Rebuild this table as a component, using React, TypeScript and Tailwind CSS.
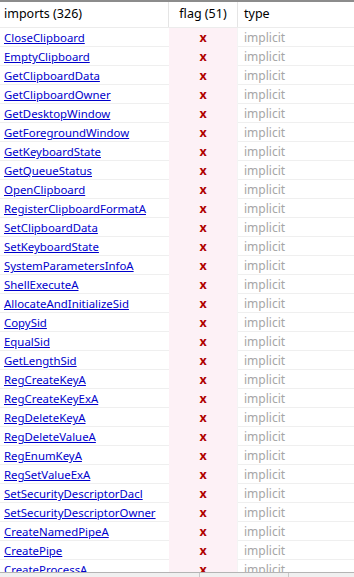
import React from 'react';

// imports list as shown in the table
const imports = [
  'CloseClipboard',
  'EmptyClipboard',
  'GetClipboardData',
  'GetClipboardOwner',
  'GetDesktopWindow',
  'GetForegroundWindow',
  'GetKeyboardState',
  'GetQueueStatus',
  'OpenClipboard',
  'RegisterClipboardFormatA',
  'SetClipboardData',
  'SetKeyboardState',
  'SystemParametersInfoA',
  'ShellExecuteA',
  'AllocateAndInitializeSid',
  'CopySid',
  'EqualSid',
  'GetLengthSid',
  'RegCreateKeyA',
  'RegCreateKeyExA',
  'RegDeleteKeyA',
  'RegDeleteValueA',
  'RegEnumKeyA',
  'RegSetValueExA',
  'SetSecurityDescriptorDacl',
  'SetSecurityDescriptorOwner',
  'CreateNamedPipeA',
  'CreatePipe',
  'CreateProcessA',
];

const App: React.FC = () => {
  return (
    <div
      className="w-[354px] h-[577px] flex flex-col bg-white overflow-hidden text-[12px]"
      style={{ fontFamily: '"Noto Sans", "Open Sans", sans-serif' }}
    >
      <div className="h-[2px] bg-[#8c8c8c] shrink-0" />

      {/* header */}
      <div className="grid grid-cols-[169px_69px_1fr] h-[26px] shrink-0 border-b border-[#ececec] text-[12.5px] text-black">
        <div className="flex items-center pl-[4px] border-r border-[#e5e5e5]">imports (326)</div>
        <div className="flex items-center justify-center border-r border-[#e5e5e5]">flag (51)</div>
        <div className="flex items-center pl-[6px]">type</div>
      </div>

      {/* rows */}
      <div className="flex-1 overflow-hidden">
        {imports.map((name) => (
          <div key={name} className="grid grid-cols-[169px_69px_1fr] h-[19px] border-b border-[#efefef]">
            <div className="flex items-center pl-[4px] pt-[1px]">
              <a href="#" className="text-[#0000cc] underline leading-none whitespace-nowrap text-[11.4px]">{name}</a>
            </div>
            <div className="flex items-center justify-center bg-[#fdf1f6] border-r border-[#f4f4f4] pt-[2px]">
              <span className="text-[#b00000] font-bold leading-none text-[12.5px]">x</span>
            </div>
            <div className="flex items-center pl-[6px] pt-[1px] text-[#a6a6a6]">implicit</div>
          </div>
        ))}
      </div>

      {/* horizontal scrollbar edge */}
      <div className="h-[5px] shrink-0 border-t border-[#b4b4b4] bg-[#f0f0f0] relative">
        <div className="absolute left-[199px] top-0 w-px h-full bg-[#c8c8c8]" />
        <div className="absolute left-[288px] top-0 w-px h-full bg-[#c8c8c8]" />
      </div>
    </div>
  );
};

export default App;
